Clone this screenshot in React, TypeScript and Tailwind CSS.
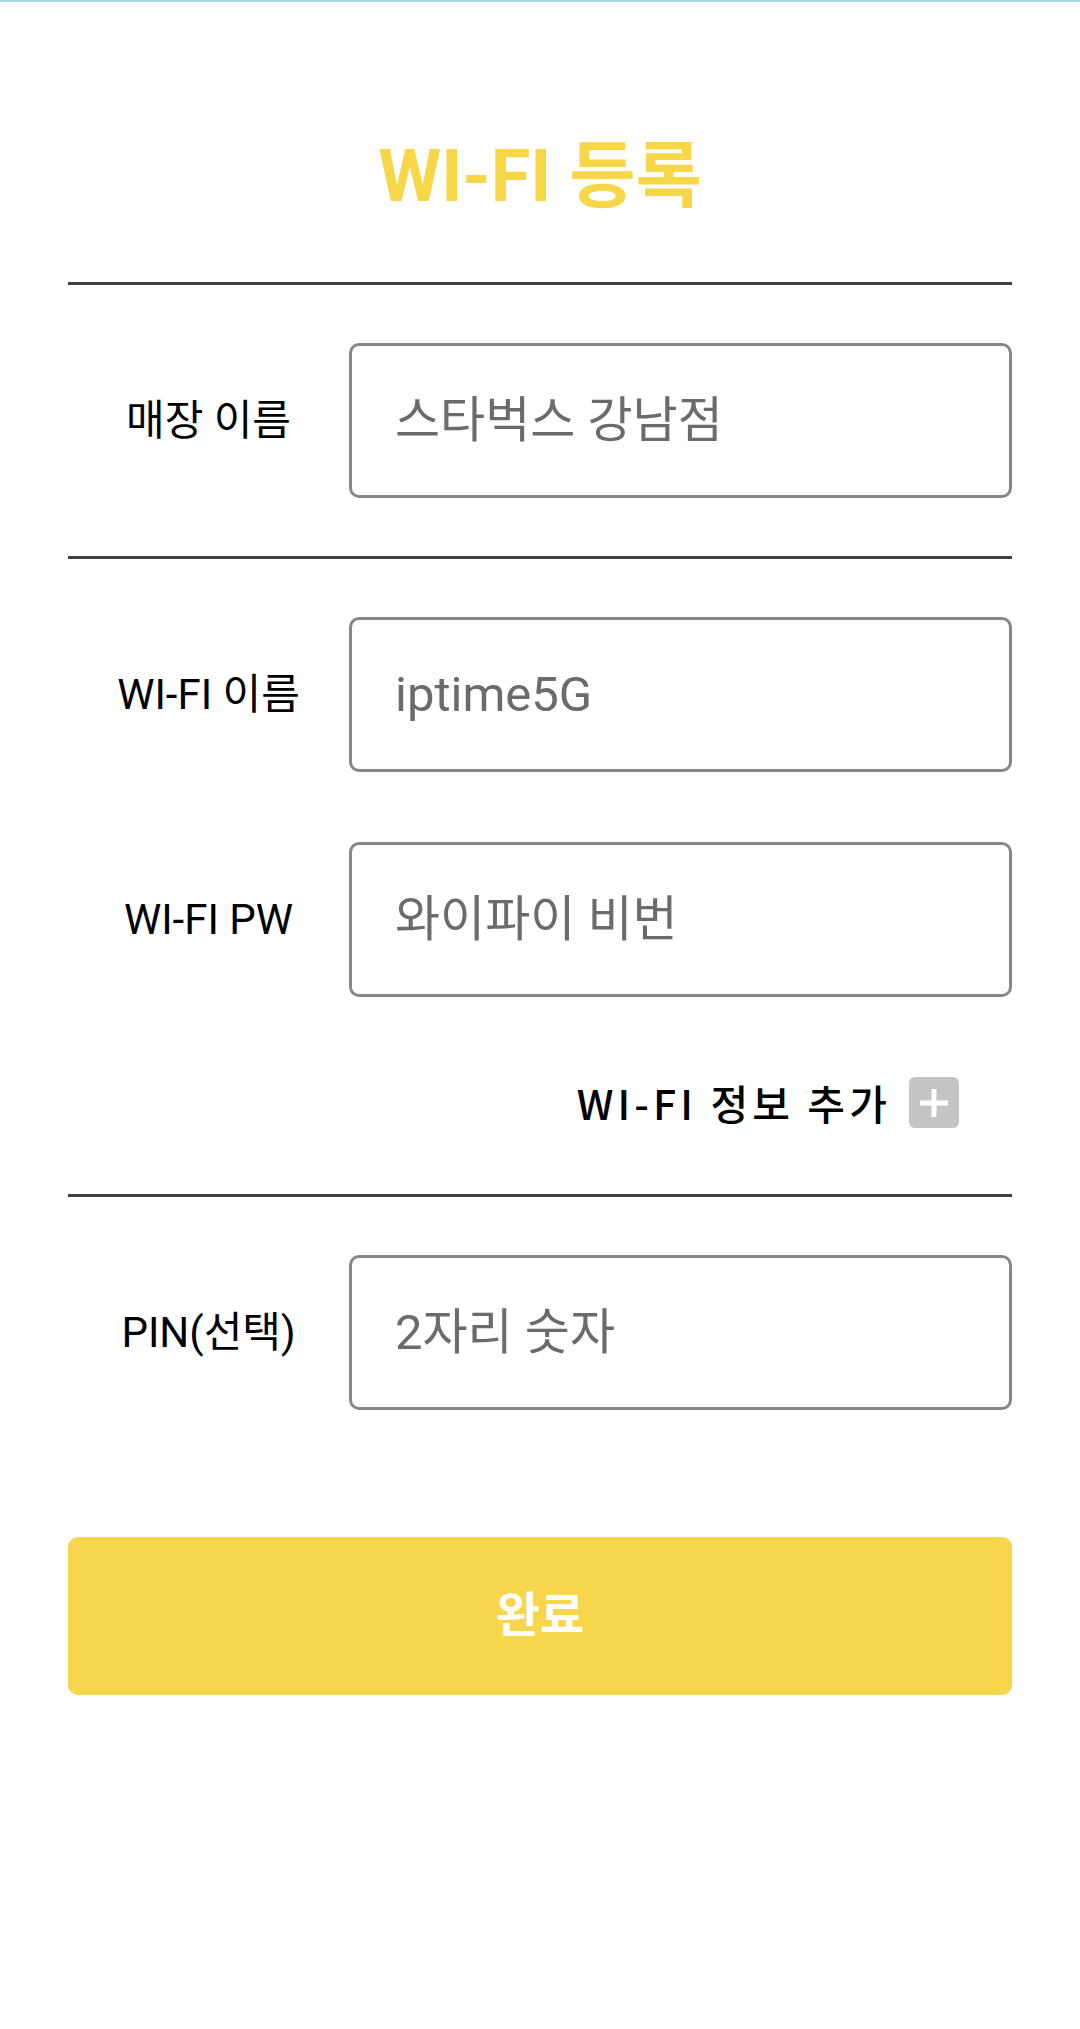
import React from 'react';

const rows = [
  { label: '매장 이름', placeholder: '스타벅스 강남점' },
];

function Field({ label, placeholder }: { label: string; placeholder: string }) {
  return (
    <div className="flex items-center">
      <div className="w-[281px] shrink-0 text-center text-[42px] text-black">{label}</div>
      <div className="flex h-[155px] flex-1 items-center rounded-[10px] border-[3px] border-[#878787] pl-[43px]">
        <span className="text-[49px] text-[#6b6b6b]">{placeholder}</span>
      </div>
    </div>
  );
}

function Divider() {
  return <div className="h-[3px] w-full bg-[#404040]" />;
}

export default function App() {
  return (
    <div
      className="min-h-[2029px] w-[1080px] border-t-2 border-[#a6d8e4] bg-white"
      style={{ fontFamily: 'Roboto, "Noto Sans CJK KR", sans-serif' }}
    >
      <div className="px-[68px]">
        {/* Title */}
        <div className="pb-[68px] pt-[138px] text-center text-[72px] font-bold leading-[74px] text-[#f7d648]">
          WI-FI 등록
        </div>

        <Divider />

        {/* Store */}
        <div className="py-[58px]">
          {rows.map((r) => (
            <Field key={r.label} label={r.label} placeholder={r.placeholder} />
          ))}
        </div>

        <Divider />

        {/* Wi-Fi info */}
        <div className="flex flex-col gap-[70px] pt-[58px]">
          <Field label="WI-FI 이름" placeholder="iptime5G" />
          <Field label="WI-FI PW" placeholder="와이파이 비번" />
        </div>

        <div className="flex items-center justify-end gap-[18px] pb-[66px] pr-[53px] pt-[80px]">
          <span
            className="text-[41px] font-medium leading-[51px] tracking-[0.1em] text-black"
            style={{ fontFamily: '"Noto Sans CJK KR", sans-serif' }}
          >
            WI-FI 정보 추가
          </span>
          <span className="flex h-[51px] w-[50px] items-center justify-center rounded-[6px] bg-[#c4c4c4]">
            <svg width="30" height="30" viewBox="0 0 30 30">
              <rect x="1" y="12.5" width="28" height="5" fill="#fff" />
              <rect x="12.5" y="1" width="5" height="28" fill="#fff" />
            </svg>
          </span>
        </div>

        <Divider />

        {/* PIN */}
        <div className="pt-[58px]">
          <Field label="PIN(선택)" placeholder="2자리 숫자" />
        </div>

        <button className="mt-[127px] flex h-[158px] w-full items-center justify-center rounded-[10px] bg-[#f7d64b] text-[48px] font-bold text-white">
          완료
        </button>
      </div>
    </div>
  );
}
